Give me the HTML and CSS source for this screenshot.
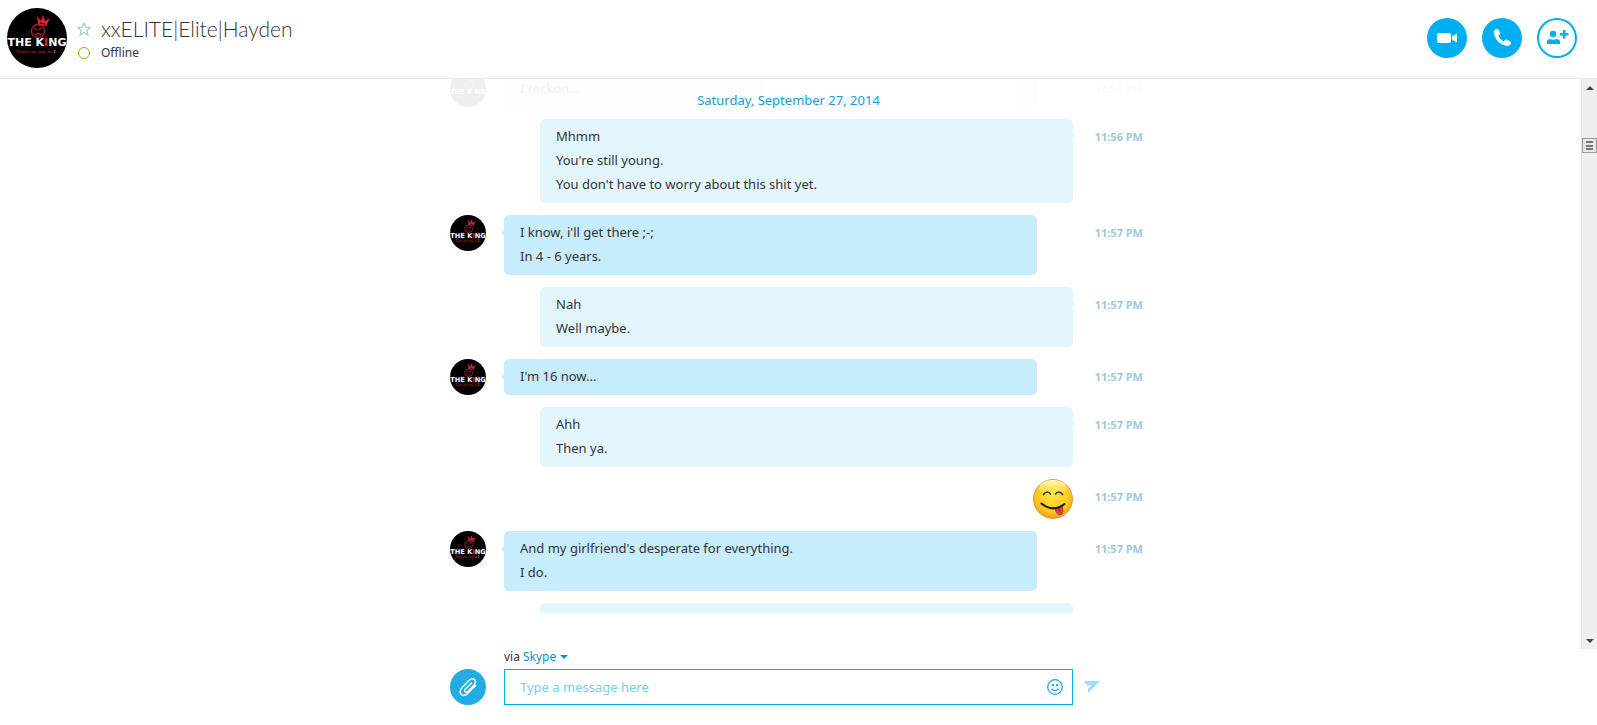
FILE: index.html
```html
<!DOCTYPE html>
<html lang="en">
<head>
    <meta charset="UTF-8">
    <meta name="viewport" content="width=device-width, initial-scale=1.0">
    <title>Skype</title>
    <link rel="stylesheet" href="styles.css">
</head>
<body>
    <header class="header">
        <!-- The group is reused by the small avatars in the conversation -->
        <svg class="avatar-large" viewBox="0 0 60 60" role="img" aria-label="Profile picture">
            <g id="avatar">
                <circle cx="30" cy="30" r="30" fill="#000"/>
                <path d="M31 17 L30 8 L34 13 L36 7 L38 13 L43 10 L39 18 Z" fill="#e0202c"/>
                <path d="M33 15 L38 16" stroke="#000" stroke-width="1"/>
                <circle cx="31" cy="23" r="6.500" fill="none" stroke="#b01c24" stroke-width="1.300"/>
                <path d="M27 20 l3 2 M35 20 l-3 2 M28 27 q3 -3 6 0" fill="none" stroke="#b01c24" stroke-width="1.300"/>
                <text x="30" y="38" class="logo-name">THE K<tspan class="logo-red">I</tspan>NG</text>
                <text x="29" y="45" class="logo-motto">There can only be <tspan class="logo-white">1</tspan></text>
            </g>
        </svg>
        <div class="contact">
            <button class="favorite" aria-label="Add to favorites">
                <svg width="14" height="14" viewBox="0 0 14 14"><path d="M7 1 L8.700 5.200 L13.300 5.500 L9.800 8.400 L11 13 L7 10.500 L3 13 L4.200 8.400 L.700 5.500 L5.300 5.200 Z" fill="none" stroke="#9cc9dc" stroke-width="1.200"/></svg>
            </button>
            <h1 class="contact-name">xxELITE|Elite|Hayden</h1>
            <span class="status-dot"></span>
            <span class="status-text">Offline</span>
        </div>
        <div class="actions">
            <button class="action" aria-label="Video call">
                <svg width="40" height="40" viewBox="0 0 40 40" fill="#fff"><rect x="10" y="15" width="14" height="10" rx="2"/><path d="M25 18.500 L30 15.500 V24.500 L25 21.500 Z"/></svg>
            </button>
            <button class="action" aria-label="Call">
                <svg width="40" height="40" viewBox="0 0 40 40" fill="#fff"><path d="M13 11.500 Q15 10.300 16.500 11.500 L18.200 15.200 Q18.200 16.500 16.500 17.500 Q17 20.500 21.500 23.400 Q23.200 21.300 24.500 21.500 L28.500 23.500 Q29.600 25 28.300 26.800 Q26.500 28.600 23 27.500 Q14.500 25 12.200 16.500 Q11.500 13 13 11.500 Z"/></svg>
            </button>
            <button class="action outline" aria-label="Add people">
                <svg width="40" height="40" viewBox="0 0 40 40" fill="#00aff0"><circle cx="16" cy="16" r="3.300"/><path d="M10 26 V23.500 Q10 21 13 21 Q16 22.500 19 21 Q23 21 23 23.500 V26 Z"/><path d="M26 12 h2.500 v3 h3 v2.400 h-3 v3 h-2.500 v-3 h-3 v-2.400 h3 Z"/></svg>
            </button>
        </div>
    </header>

    <main class="chat">
        <div class="viewport">
            <div class="date">Saturday, September 27, 2014</div>
            <div class="messages">
                <div class="message faded">
                    <svg class="avatar" viewBox="0 0 60 60"><use href="#avatar"/></svg>
                    <div class="bubble incoming"><p>I reckon...</p></div>
                    <time>11:56 PM</time>
                </div>
                <div class="message">
                    <div class="bubble outgoing">
                        <p>Mhmm</p>
                        <p>You're still young.</p>
                        <p>You don't have to worry about this shit yet.</p>
                    </div>
                    <time>11:56 PM</time>
                </div>
                <div class="message">
                    <svg class="avatar" viewBox="0 0 60 60"><use href="#avatar"/></svg>
                    <div class="bubble incoming">
                        <p>I know, i'll get there ;-;</p>
                        <p>In 4 - 6 years.</p>
                    </div>
                    <time>11:57 PM</time>
                </div>
                <div class="message">
                    <div class="bubble outgoing">
                        <p>Nah</p>
                        <p>Well maybe.</p>
                    </div>
                    <time>11:57 PM</time>
                </div>
                <div class="message">
                    <svg class="avatar" viewBox="0 0 60 60"><use href="#avatar"/></svg>
                    <div class="bubble incoming"><p>I'm 16 now...</p></div>
                    <time>11:57 PM</time>
                </div>
                <div class="message">
                    <div class="bubble outgoing">
                        <p>Ahh</p>
                        <p>Then ya.</p>
                    </div>
                    <time>11:57 PM</time>
                </div>
                <div class="message">
                    <svg class="emoticon" viewBox="0 0 40 40" role="img" aria-label="Tongue out">
                        <defs>
                            <radialGradient id="face" cx="50%" cy="40%" r="60%">
                                <stop offset="0" stop-color="#ffe640"/>
                                <stop offset=".7" stop-color="#fdc920"/>
                                <stop offset="1" stop-color="#f09a1c"/>
                            </radialGradient>
                            <linearGradient id="shine" x1="0" y1="0" x2="0" y2="1">
                                <stop offset="0" stop-color="#fffbd0"/>
                                <stop offset="1" stop-color="#ffe640" stop-opacity="0"/>
                            </linearGradient>
                        </defs>
                        <circle cx="20" cy="20" r="19.500" fill="url(#face)" stroke="#e58a2c" stroke-width=".8"/>
                        <ellipse cx="20" cy="9" rx="14" ry="8" fill="url(#shine)"/>
                        <path d="M10 16 Q14 10.500 18 15.500 M22 15.500 Q26 10.500 30 16" fill="none" stroke="#3a3208" stroke-width="1.500"/>
                        <path d="M22 29.500 L29.500 27 Q31 33 28.500 35.500 Q25 37 23 33 Z" fill="#d9443c" stroke="#8e2420" stroke-width=".6"/>
                        <path d="M25.500 29 L27 33" stroke="#8e2420" stroke-width=".8"/>
                        <path d="M8.500 24.500 Q20 34 31.500 25" fill="none" stroke="#1c1404" stroke-width="2" stroke-linecap="round"/>
                    </svg>
                    <time>11:57 PM</time>
                </div>
                <div class="message">
                    <svg class="avatar" viewBox="0 0 60 60"><use href="#avatar"/></svg>
                    <div class="bubble incoming">
                        <p>And my girlfriend's desperate for everything.</p>
                        <p>I do.</p>
                    </div>
                    <time>11:57 PM</time>
                </div>
                <div class="message">
                    <div class="bubble outgoing cut"></div>
                </div>
            </div>
        </div>
        <div class="scrollbar">
            <button class="scroll-arrow" aria-label="Scroll up">
                <svg width="8" height="4" viewBox="0 0 8 4"><path d="M0 4 L4 0 L8 4 Z" fill="#444"/></svg>
            </button>
            <div class="thumb"><i></i><i></i><i></i></div>
            <button class="scroll-arrow down" aria-label="Scroll down">
                <svg width="8" height="4" viewBox="0 0 8 4"><path d="M0 0 L4 4 L8 0 Z" fill="#444"/></svg>
            </button>
        </div>
    </main>

    <form class="composer">
        <div class="via">
            <label for="service">via</label>
            <select id="service"><option>Skype</option></select>
            <svg width="8" height="4" viewBox="0 0 8 4"><path d="M0 0 H8 L4 4 Z" fill="#0095cc"/></svg>
        </div>
        <button type="button" class="attach" aria-label="Attach a file">
            <svg width="36" height="36" viewBox="0 0 36 36" fill="none" stroke="#fff" stroke-width="1.500" stroke-linecap="round"><path d="M21.500 14 L15.500 20 Q13.800 22 15 23 Q16.200 24 18 22.200 L24 16 Q26.600 13 24.600 10.800 Q22.300 8.500 19.300 11.300 L12 18.700 Q8.500 22.600 11.300 25.500 Q14 28 17.700 24.500 L25.500 16.500"/></svg>
        </button>
        <div class="input-box">
            <input type="text" id="message" placeholder="Type a message here" aria-label="Message">
            <button type="button" class="smiley" aria-label="Emoticons">
                <svg width="16" height="16" viewBox="0 0 16 16" fill="none" stroke="#1eabe3"><circle cx="8" cy="8" r="7.300" stroke-width="1.300"/><path d="M4.500 9.800 Q8 13.300 11.500 9.800" stroke-width="1.300"/><path d="M5 6 h2 M9 6 h2" stroke-width="2"/></svg>
            </button>
        </div>
        <button class="send" aria-label="Send">
            <svg width="16" height="12" viewBox="0 0 16 12"><path d="M0 0 H16 L4 12 V7.500 L7.500 4.500 L3 4.500 Z" fill="#99dff9"/></svg>
        </button>
    </form>
</body>
</html>
```
FILE: styles.css
```css
* {
    box-sizing: border-box;
}
body {
    font-family: 'Noto Sans', 'Open Sans', sans-serif;
    font-size: 13px;
    color: #333;
    background-color: #fff;
    margin: 0;
    display: flex;
    flex-direction: column;
    height: 100vh;
}
h1, p {
    margin: 0;
}
button {
    background: none;
    border: none;
    padding: 0;
    cursor: pointer;
}
svg {
    display: block;
    flex: none;
}
.logo-name {
    font: bold 11px 'DejaVu Sans', sans-serif;
    fill: #fff;
    text-anchor: middle;
}
.logo-red {
    fill: #e0202c;
}
.logo-motto {
    font: italic 5px 'Liberation Serif', serif;
    fill: #d8202a;
    text-anchor: middle;
}
.logo-white {
    fill: #fff;
}

/* Header */
.header {
    display: flex;
    align-items: flex-start;
    flex: none;
    padding: 8px 20px 10px 7px;
    border-bottom: 1px solid #dfe9ee;
}
.avatar-large {
    width: 60px;
    height: 60px;
}
.contact {
    display: grid;
    grid-template-columns: 14px auto;
    grid-template-rows: 32px 16px;
    column-gap: 10px;
    align-items: center;
    margin: 5px 0 0 10px;
}
.contact-name {
    font-family: Lato, 'Open Sans', sans-serif;
    font-size: 21px;
    font-weight: 300;
    line-height: 32px;
}
.status-dot {
    width: 12px;
    height: 12px;
    border: 1px solid #7fba00;
    border-radius: 50%;
    justify-self: center;
}
.status-text {
    font-size: 12px;
    line-height: 16px;
}
.actions {
    display: flex;
    gap: 15px;
    margin: 10px 0 0 auto;
}
.action {
    width: 40px;
    height: 40px;
    border-radius: 50%;
    background-color: #00aff0;
}
.action.outline {
    background-color: #fff;
    box-shadow: inset 0 0 0 2px #00aff0;
}

/* Conversation */
.chat {
    display: flex;
    flex: 1;
    min-height: 0;
}
.viewport {
    flex: 1;
    position: relative;
    overflow: hidden;
    margin-bottom: 36px;
    padding-left: 16px; /* same as the scrollbar, keeps the column centred */
}
.messages {
    display: flex;
    flex-direction: column;
    gap: 12px;
    max-width: 697px;
    margin: -8px auto 0;
}
.date {
    position: absolute;
    top: 11px;
    left: 0;
    right: 4px;
    text-align: center;
    line-height: 20px;
    color: #0f97d2;
}
.message {
    display: grid;
    grid-template-columns: 36px 1fr 56px;
    column-gap: 18px;
    align-items: start;
}
.faded {
    opacity: 0.06;
}
.avatar {
    width: 36px;
    height: 36px;
}
.bubble {
    grid-column: 2;
    position: relative;
    padding: 5px 16px 7px;
    border-radius: 5px;
    line-height: 24px;
}
.incoming {
    background-color: #c7ecfc;
    margin-right: 36px;
}
.outgoing {
    background-color: #e4f6fd;
    margin-left: 36px;
}
.bubble::before {
    content: "";
    position: absolute;
    top: 14px;
    border: 4px solid transparent;
}
.incoming::before {
    left: -7px;
    border-right-color: #c7ecfc;
}
.outgoing::before {
    right: -7px;
    border-left-color: #e4f6fd;
}
.cut {
    height: 36px;
}
time {
    grid-column: 3;
    font-size: 11px;
    font-weight: bold;
    line-height: 36px;
    color: #a0c8da;
    text-align: right;
    padding-right: 4px;
    white-space: nowrap;
}
.emoticon {
    grid-column: 2;
    justify-self: end;
    width: 40px;
    height: 40px;
}

/* Scrollbar */
.scrollbar {
    display: flex;
    flex-direction: column;
    width: 16px;
    background-color: #efefef;
    border-left: 1px solid #e2e2e2;
}
.scroll-arrow {
    height: 17px;
    display: flex;
    align-items: center;
    justify-content: center;
}
.scroll-arrow.down {
    margin-top: auto;
}
.thumb {
    height: 15px;
    margin-top: 42px;
    padding: 2px 3px;
    display: flex;
    flex-direction: column;
    justify-content: space-between;
    border: 1px solid #999;
    background-color: #e8e8e8;
}
.thumb i {
    height: 2px;
    background-color: #777;
}

/* Composer */
.composer {
    display: grid;
    grid-template-columns: 36px 1fr 56px;
    column-gap: 18px;
    row-gap: 4px;
    flex: none;
    width: 100%;
    max-width: 697px;
    margin: 0 auto;
    padding-bottom: 20px;
}
.via {
    grid-column: 2 / 4;
    display: flex;
    align-items: center;
    gap: 3px;
    font-size: 12px;
    line-height: 16px;
}
.via select {
    appearance: none;
    border: none;
    padding: 0;
    background: none;
    font: inherit;
    color: #0095cc;
}
.attach {
    width: 36px;
    height: 36px;
    border-radius: 50%;
    background-color: #22ace4;
}
.input-box {
    display: flex;
    align-items: center;
    height: 36px;
    padding: 0 9px 0 15px;
    border: 1px solid #00aff0;
}
.input-box input {
    flex: 1;
    min-width: 0;
    padding: 0;
    border: none;
    outline: none;
    font: inherit;
}
.input-box input::placeholder {
    color: #74d0f4;
}
.send {
    justify-self: start;
    margin-left: -7px;
}
```
